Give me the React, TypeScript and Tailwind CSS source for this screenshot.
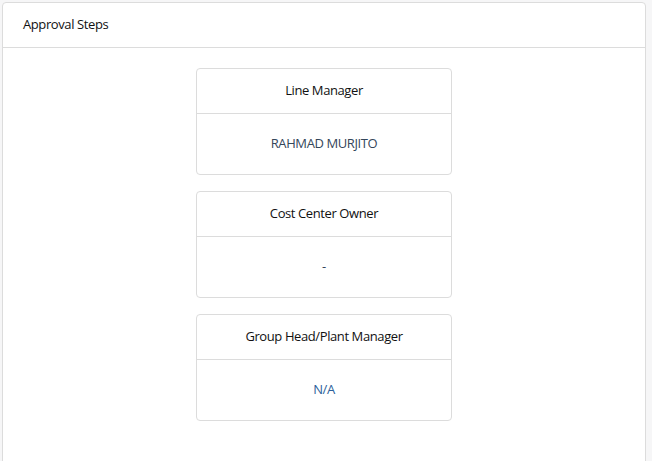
const steps = [
  { title: "Line Manager", value: "RAHMAD MURJITO", color: "text-[#34465a]" },
  { title: "Cost Center Owner", value: "-", color: "text-[#34465a]" },
  { title: "Group Head/Plant Manager", value: "N/A", color: "text-[#2d5f9a]" },
];

const App = () => {
  return (
    <div
      className="h-[461px] w-[652px] overflow-hidden bg-[#f6f6f7] pl-[2px] pt-[2px]"
      style={{ fontFamily: '"Open Sans", "Noto Sans", sans-serif' }}
    >
      <div className="h-[470px] w-[644px] rounded-t-[4px] border border-[#dcdcdc] bg-white">
        <div className="flex h-[45px] items-center border-b border-[#dcdcdc] pl-[20px] text-[13px] tracking-[-0.4px] text-[#111]">
          Approval Steps
        </div>
        <div className="flex flex-col items-center gap-[16px] pt-[20px]">
          {steps.map((s) => (
            <div
              key={s.title}
              className="w-[256px] rounded-[4px] border border-[#dcdcdc] bg-white"
            >
              <div className="flex h-[45px] items-center justify-center border-b border-[#dcdcdc] text-[13px] tracking-[-0.4px] text-[#111]">
                {s.title}
              </div>
              <div
                className={`flex h-[60px] items-center justify-center text-[13px] tracking-[-0.4px] ${s.color}`}
              >
                {s.value}
              </div>
            </div>
          ))}
        </div>
      </div>
    </div>
  );
};

export default App;
